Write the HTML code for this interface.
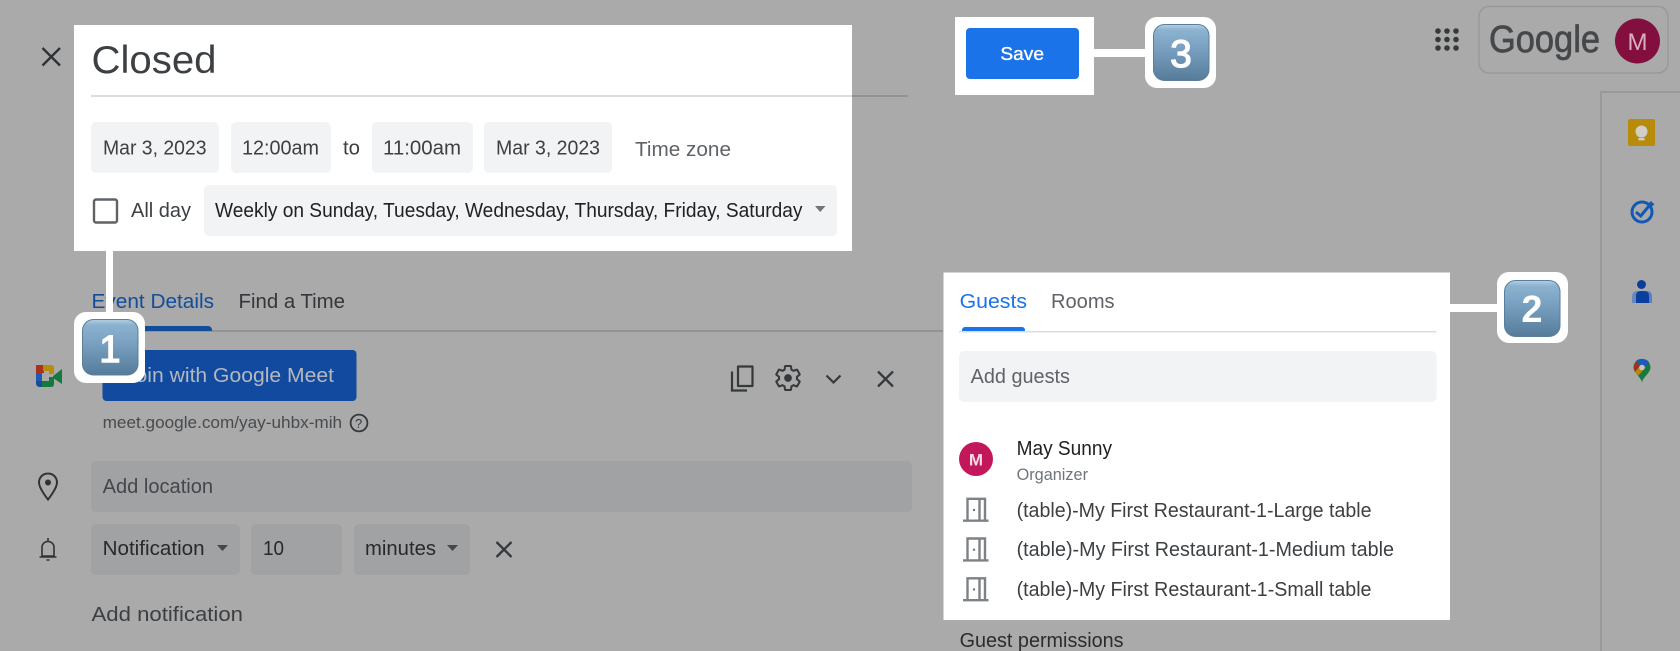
<!DOCTYPE html>
<html><head><meta charset="utf-8"><style>
html,body{margin:0;padding:0;width:1680px;height:651px;overflow:hidden;background:#aaa}
svg{display:block;filter:blur(.35px)}
text{font-family:"Liberation Sans",sans-serif;font-size:20px}
</style></head><body>
<svg width="1680" height="651" viewBox="0 0 1680 651" xmlns="http://www.w3.org/2000/svg">
<defs>
<linearGradient id="k" x1="0" y1="0" x2="0" y2="1"><stop offset="0" stop-color="#b4cfe2"/><stop offset=".1" stop-color="#8bb2cf"/><stop offset=".45" stop-color="#789fbf"/><stop offset="1" stop-color="#567b9a"/></linearGradient>
</defs>
<rect width="1680" height="651" fill="#aaa"/>

<!-- top-left close -->
<path d="M42.5 48L60 65.5M60 48L42.5 65.5" stroke="#303335" stroke-width="2.4" fill="none"/>
<rect x="852" y="95" width="56" height="2" fill="#929395"/>

<!-- event tabs -->
<text x="91.5" y="308" textLength="122.5" lengthAdjust="spacingAndGlyphs" fill="#114d9b">Event Details</text>
<text x="238.5" y="308" textLength="106.5" lengthAdjust="spacingAndGlyphs" fill="#33363a">Find a Time</text>
<rect x="91" y="330" width="852" height="2" fill="#929395"/>
<path d="M91 331v-1a4 4 0 0 1 4-4h113a4 4 0 0 1 4 4v1z" fill="#114d9b"/>

<!-- meet -->
<g>
<path d="M44 365H36V373H44Z" fill="#a8321f"/>
<path d="M36 373H42V381H36Z" fill="#1e5bb5"/>
<path d="M36 381H42V387H40Q36 387 36 383Z" fill="#174a99"/>
<path d="M43 365H51Q54 365 54 368V374L49 374V371H43Z" fill="#b78c0a"/>
<path d="M42 381H49V377L54 377V384Q54 387 51 387H42Z" fill="#177a3d"/>
<path d="M53 376L62 369V384L53 378Z" fill="#177a3d"/>
</g>
<rect x="102.5" y="350" width="254" height="51" rx="4" fill="#114a9f"/>
<text x="125" y="382" textLength="209" lengthAdjust="spacingAndGlyphs" fill="#b5b8bc">Join with Google Meet</text>
<text x="102.6" y="428" textLength="239.5" lengthAdjust="spacingAndGlyphs" fill="#484b4e" style="font-size:17px">meet.google.com/yay-uhbx-mih</text>
<circle cx="359" cy="423" r="8.4" fill="none" stroke="#36393c" stroke-width="1.8"/>
<text x="355" y="428" fill="#36393c" style="font-size:13px">?</text>

<!-- right icons of meet -->
<path d="M738 366.5H752.5V386H738Z" fill="none" stroke="#36393c" stroke-width="2.2" stroke-linejoin="round"/>
<path d="M732 371.5V390.5H747" fill="none" stroke="#36393c" stroke-width="2.2"/>
<g transform="translate(773.6 363.6) scale(1.2)">
<path d="M19.43 12.98c.04-.32.07-.64.07-.98 0-.34-.03-.66-.07-.98l2.11-1.65c.19-.15.24-.42.12-.64l-2-3.46c-.12-.22-.39-.3-.61-.22l-2.49 1c-.52-.4-1.08-.73-1.69-.98l-.38-2.65C14.46 2.18 14.25 2 14 2h-4c-.25 0-.46.18-.49.42l-.38 2.65c-.61.25-1.17.59-1.69.98l-2.49-1c-.23-.09-.49 0-.61.22l-2 3.46c-.13.22-.07.49.12.64l2.11 1.65c-.04.32-.07.65-.07.98 0 .33.03.66.07.98l-2.11 1.65c-.19.15-.24.42-.12.64l2 3.46c.12.22.39.3.61.22l2.49-1c.52.4 1.08.73 1.69.98l.38 2.65c.03.24.24.42.49.42h4c.25 0 .46-.18.49-.42l.38-2.65c.61-.25 1.17-.59 1.69-.98l2.49 1c.23.09.49 0 .61-.22l2-3.46c.12-.22.07-.49-.12-.64l-2.11-1.65z" fill="none" stroke="#36393c" stroke-width="1.7"/>
<circle cx="12" cy="12" r="3.2" fill="#36393c"/>
</g>
<path d="M826.5 375.5L833.5 382.5L840.5 375.5" fill="none" stroke="#36393c" stroke-width="2.2"/>
<path d="M878 371.5L893 386.5M893 371.5L878 386.5" stroke="#36393c" stroke-width="2.3"/>

<!-- location -->
<path d="M48 473.5C42.5 473.5 39 477.7 39 482.5C39 488.5 48 499.5 48 499.5C48 499.5 57 488.5 57 482.5C57 477.7 53.5 473.5 48 473.5Z" fill="none" stroke="#303335" stroke-width="2"/>
<circle cx="48" cy="482.5" r="3" fill="#303335"/>
<rect x="91" y="461" width="821" height="51" rx="5" fill="#a0a2a3"/>
<text x="102.6" y="493" textLength="110.5" lengthAdjust="spacingAndGlyphs" fill="#43464a">Add location</text>

<!-- notification -->
<path d="M48 538V541.5M42 556V547.5C42 544 44.5 541.5 48 541.5C51.5 541.5 54 544 54 547.5V556ZM39.5 557H56.5M46.5 560H49.5" fill="none" stroke="#303335" stroke-width="1.6"/>
<rect x="91" y="524" width="149" height="51" rx="5" fill="#a0a2a3"/>
<text x="102.6" y="555" textLength="102" lengthAdjust="spacingAndGlyphs" fill="#27292b">Notification</text>
<path d="M217 545H228L222.5 551Z" fill="#45484b"/>
<rect x="251" y="524" width="91" height="51" rx="5" fill="#a0a2a3"/>
<text x="263" y="555" textLength="21" lengthAdjust="spacingAndGlyphs" fill="#27292b">10</text>
<rect x="354" y="524" width="116" height="51" rx="5" fill="#a0a2a3"/>
<text x="365" y="555" textLength="71" lengthAdjust="spacingAndGlyphs" fill="#27292b">minutes</text>
<path d="M447 545H458L452.5 551Z" fill="#45484b"/>
<path d="M496.5 542L511.5 557M511.5 542L496.5 557" stroke="#36393c" stroke-width="2.3"/>
<text x="91.5" y="621" textLength="151.5" lengthAdjust="spacingAndGlyphs" fill="#3c3f42">Add notification</text>

<!-- white panel 1 -->
<rect x="74" y="25" width="778" height="226" fill="#fff"/>
<text x="91.5" y="73" textLength="125" lengthAdjust="spacingAndGlyphs" fill="#3c4043" style="font-size:39px">Closed</text>
<rect x="91" y="95" width="761" height="2" fill="#dadce0"/>
<rect x="91" y="122" width="128" height="51" rx="5" fill="#f1f3f4"/>
<rect x="231" y="122" width="100" height="51" rx="5" fill="#f1f3f4"/>
<rect x="372" y="122" width="101" height="51" rx="5" fill="#f1f3f4"/>
<rect x="484" y="122" width="128" height="51" rx="5" fill="#f1f3f4"/>
<text x="103" y="154.5" textLength="103.5" lengthAdjust="spacingAndGlyphs" fill="#3c4043">Mar 3, 2023</text>
<text x="242" y="154.5" textLength="77" lengthAdjust="spacingAndGlyphs" fill="#3c4043">12:00am</text>
<text x="343" y="154.5" textLength="17" lengthAdjust="spacingAndGlyphs" fill="#3c4043">to</text>
<text x="383" y="154.5" textLength="78" lengthAdjust="spacingAndGlyphs" fill="#3c4043">11:00am</text>
<text x="496" y="154.5" textLength="104" lengthAdjust="spacingAndGlyphs" fill="#3c4043">Mar 3, 2023</text>
<text x="635" y="156" textLength="96" lengthAdjust="spacingAndGlyphs" fill="#5f6368">Time zone</text>
<rect x="94" y="199.5" width="23" height="23" rx="2" fill="#fff" stroke="#5f6368" stroke-width="2.4"/>
<text x="131" y="217" textLength="60" lengthAdjust="spacingAndGlyphs" fill="#3c4043">All day</text>
<rect x="204" y="185" width="633" height="51" rx="5" fill="#f1f3f4"/>
<text x="215" y="217" textLength="587.5" lengthAdjust="spacingAndGlyphs" fill="#202124">Weekly on Sunday, Tuesday, Wednesday, Thursday, Friday, Saturday</text>
<path d="M815 206H825.5L820.2 212Z" fill="#70757a"/>

<!-- connector + callout 1 -->
<rect x="106" y="251" width="7" height="65" fill="#fff"/>
<rect x="74" y="312" width="71" height="71" rx="12" fill="#fff"/>
<rect x="82.5" y="319.5" width="55.5" height="55.5" rx="11" fill="url(#k)" stroke="#5a7f9c" stroke-width="1"/>
<text x="110" y="362" text-anchor="middle" fill="#fff" stroke="#fff" stroke-width="1.4" style="font-size:38px">1</text>

<!-- save panel -->
<rect x="955" y="17" width="139" height="78" fill="#fff"/>
<rect x="966" y="28" width="113" height="51" rx="4" fill="#1a73e8"/>
<text x="1000.4" y="60" textLength="43.6" lengthAdjust="spacingAndGlyphs" fill="#fff" stroke="#fff" stroke-width=".35" style="font-size:18px">Save</text>
<rect x="1094" y="49" width="56" height="8" fill="#fff"/>
<rect x="1145" y="17" width="71" height="71" rx="12" fill="#fff"/>
<rect x="1153.5" y="24.5" width="55.5" height="56" rx="11" fill="url(#k)" stroke="#5a7f9c" stroke-width="1"/>
<text x="1181" y="67" text-anchor="middle" fill="#fff" stroke="#fff" stroke-width="1.2" style="font-size:39px">3</text>

<!-- apps + google -->
<g fill="#36393c"><circle cx="1438" cy="31" r="2.8"/><circle cx="1447" cy="31" r="2.8"/><circle cx="1456" cy="31" r="2.8"/><circle cx="1438" cy="39.5" r="2.8"/><circle cx="1447" cy="39.5" r="2.8"/><circle cx="1456" cy="39.5" r="2.8"/><circle cx="1438" cy="48" r="2.8"/><circle cx="1447" cy="48" r="2.8"/><circle cx="1456" cy="48" r="2.8"/></g>
<rect x="1479" y="6.5" width="189" height="66.5" rx="10" fill="none" stroke="#999" stroke-width="1.5"/>
<text x="1489" y="52" textLength="111" lengthAdjust="spacingAndGlyphs" fill="#45484a" stroke="#45484a" stroke-width=".7" style="font-size:38px">Google</text>
<circle cx="1637.5" cy="41" r="22.5" fill="#820f3d"/>
<text x="1637.5" y="50" text-anchor="middle" fill="#d8b0c0" style="font-size:24px">M</text>

<!-- side rail -->
<path d="M1601 651V92H1680" fill="none" stroke="#999" stroke-width="2"/>
<rect x="1628" y="119" width="27" height="27" rx="2" fill="#b88c0a"/>
<circle cx="1641.5" cy="131.5" r="6" fill="#d0cfc8"/>
<rect x="1638.5" y="138" width="6" height="2.4" fill="#d0cfc8"/>
<circle cx="1642" cy="212" r="10" fill="none" stroke="#1259b4" stroke-width="3"/>
<path d="M1636 212L1640.7 216L1649 206" fill="none" stroke="#1259b4" stroke-width="3"/>
<path d="M1648 204L1651 201L1654.5 204.5L1651 207Z" fill="#1259b4"/>
<path d="M1632 303V297Q1632 291 1638 291H1644V303Z" fill="#6a86c0"/>
<path d="M1636 303V296Q1636 291 1641 291H1647Q1652 291 1652 297V303Z" fill="#5a7cc0"/>
<path d="M1636 303V296Q1636 291 1641 291H1644Q1649 291 1649 296V303Z" fill="#0b3f9e"/>
<circle cx="1641.5" cy="284.5" r="4.5" fill="#0b3f9e"/>
<path d="M1642 383C1642 378 1633.5 373 1633.5 367.5C1633.5 362.5 1637 359.2 1642 359.2C1647 359.2 1650.5 362.5 1650.5 367.5C1650.5 373 1642 378 1642 383Z" fill="#177a3d"/>
<path d="M1636 361L1633.5 367.5L1635 372L1640 366Z" fill="#a5301f"/>
<path d="M1635 372L1638 376L1646 367L1640 366Z" fill="#b8890b"/>
<path d="M1636 361C1639 358 1646 358 1649 362L1644 369L1640 366Z" fill="#1e5bb5"/>
<circle cx="1642" cy="367.5" r="2.8" fill="#c5c5c5"/>

<!-- guests below -->
<text x="959.6" y="647" textLength="164" lengthAdjust="spacingAndGlyphs" fill="#2a2c2e">Guest permissions</text>

<!-- white panel 2 -->
<rect x="943.5" y="272.5" width="506.5" height="347.5" fill="#fff"/>
<text x="959.6" y="308" textLength="67.4" lengthAdjust="spacingAndGlyphs" fill="#1a73e8">Guests</text>
<text x="1051" y="308" textLength="63.6" lengthAdjust="spacingAndGlyphs" fill="#5f6368">Rooms</text>
<rect x="959" y="331" width="477.5" height="1.5" fill="#dadce0"/>
<path d="M962 331v-1a3 3 0 0 1 3-3h57a3 3 0 0 1 3 3v1z" fill="#1a73e8"/>
<rect x="959" y="351" width="477.5" height="51" rx="5" fill="#f1f3f4"/>
<text x="970.6" y="383" textLength="99.4" lengthAdjust="spacingAndGlyphs" fill="#5f6368">Add guests</text>
<circle cx="976" cy="459" r="17" fill="#c2185b"/>
<text x="976" y="465.5" text-anchor="middle" fill="#f6dbe6" style="font-size:17px;font-weight:bold">M</text>
<text x="1016.6" y="455" textLength="95.4" lengthAdjust="spacingAndGlyphs" fill="#202124">May Sunny</text>
<text x="1016.6" y="480" textLength="71.4" lengthAdjust="spacingAndGlyphs" fill="#70757a" style="font-size:16.5px">Organizer</text>
<g fill="none" stroke="#7d8287" stroke-width="2.4">
<path d="M963 520.7H988.5M967.5 520.7V498.8H985V520.7M979.5 498.8V520.7"/>
<circle cx="974" cy="510" r="1.2" fill="#70757a" stroke="none"/>
</g>
<g fill="none" stroke="#7d8287" stroke-width="2.4" transform="translate(0 39.7)">
<path d="M963 520.7H988.5M967.5 520.7V498.8H985V520.7M979.5 498.8V520.7"/>
<circle cx="974" cy="510" r="1.2" fill="#70757a" stroke="none"/>
</g>
<g fill="none" stroke="#7d8287" stroke-width="2.4" transform="translate(0 79.5)">
<path d="M963 520.7H988.5M967.5 520.7V498.8H985V520.7M979.5 498.8V520.7"/>
<circle cx="974" cy="510" r="1.2" fill="#70757a" stroke="none"/>
</g>
<text x="1016.6" y="517" textLength="354.9" lengthAdjust="spacingAndGlyphs" fill="#3c4043">(table)-My First Restaurant-1-Large table</text>
<text x="1016.6" y="556" textLength="377.4" lengthAdjust="spacingAndGlyphs" fill="#3c4043">(table)-My First Restaurant-1-Medium table</text>
<text x="1016.6" y="596" textLength="354.9" lengthAdjust="spacingAndGlyphs" fill="#3c4043">(table)-My First Restaurant-1-Small table</text>

<!-- connector + callout 2 -->
<rect x="1450" y="304" width="48" height="8" fill="#fff"/>
<rect x="1497" y="272" width="71" height="71" rx="12" fill="#fff"/>
<rect x="1504.5" y="280.5" width="55.5" height="56" rx="11" fill="url(#k)" stroke="#5a7f9c" stroke-width="1"/>
<text x="1532" y="322" text-anchor="middle" fill="#fff" style="font-size:38px;font-weight:bold">2</text>
</svg>
</body></html>
